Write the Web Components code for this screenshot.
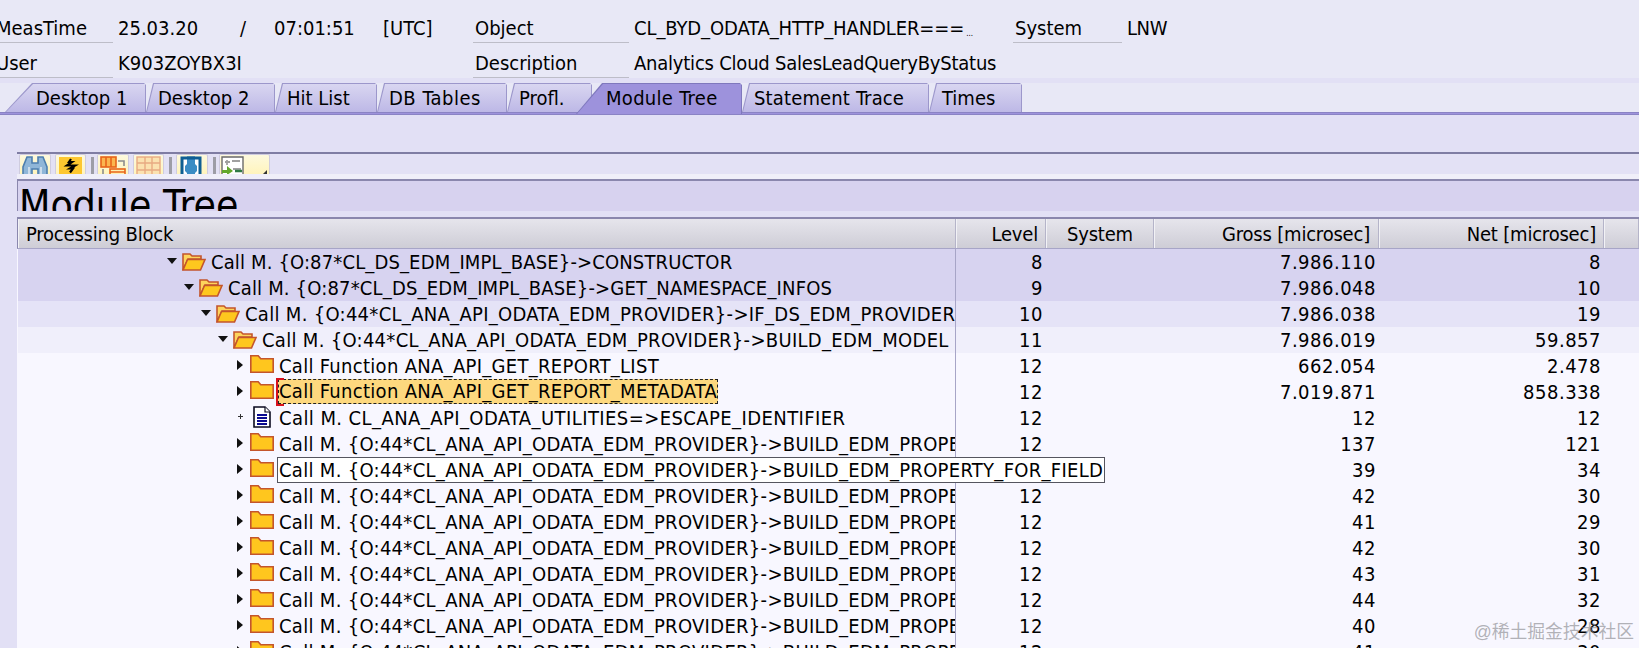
<!DOCTYPE html>
<html lang="en"><head><meta charset="utf-8"><title>Module Tree</title>
<style>
html,body{margin:0;padding:0;height:648px;overflow:hidden;background:#e8e8f6}
body{font-family:"DejaVu Sans",sans-serif;font-stretch:condensed;font-size:17px;color:#000}
</style></head><body>
<sat-app></sat-app>
<script>
const FONT=`font-family:"DejaVu Sans",sans-serif;font-stretch:condensed;`;
const FS='20px';
function el(name,cls){const e=document.createElement(name);if(cls)e.className=cls;return e}

class SatMeta extends HTMLElement{
  constructor(){super();const s=this.attachShadow({mode:'open'});
  s.innerHTML=`<style>
  :host{display:grid;grid-template-columns:118px 122px 34px 109px 90px 161px 379px 114px 1fr;grid-auto-rows:35px;padding-top:8px;height:70px;${FONT}font-size:${FS};background:#e8e8f6}
  .c{display:flex;align-items:center;white-space:nowrap;padding-top:5px;box-sizing:border-box}
  .l{border-bottom:1px solid #bdbdc8}
  .l1{margin-right:5px}
  .l1 span{margin-left:-4px}
  .l2{margin-right:5px;padding-left:2px}
  .wide{grid-column:2 / span 4}
  </style>
  <div class="c l l1"><span>MeasTime</span></div><div class="c">25.03.20</div><div class="c">/</div><div class="c">07:01:51</div><div class="c">[UTC]</div>
  <div class="c l l2">Object</div><div class="c" style="letter-spacing:-.1px">CL_BYD_ODATA_HTTP_HANDLER===<span style="font-size:8px;padding-top:10px;margin-left:2px">...</span></div>
  <div class="c l l2">System</div><div class="c" style="letter-spacing:-.4px">LNW</div>
  <div class="c l l1"><span>User</span></div><div class="c wide">K903ZOYBX3I</div>
  <div class="c l l2">Description</div><div class="c" style="grid-column:span 3;letter-spacing:-.22px">Analytics Cloud SalesLeadQueryByStatus</div>`;}
}
customElements.define('sat-meta',SatMeta);

class SatTab extends HTMLElement{
  constructor(){super();const s=this.attachShadow({mode:'open'});
  s.innerHTML=`<style>
  :host{display:block;box-sizing:border-box;height:29px;padding:1px 1px 0 1px;background:#9c97cb;
    width:var(--w);margin-left:var(--ml,0);letter-spacing:var(--ls,0);
    clip-path:polygon(var(--sl) 0,calc(100% - 2px) 0,100% 2px,100% 100%,0 100%);${FONT}font-size:${FS};}
  .i{height:28px;box-sizing:border-box;padding-left:var(--pl);display:flex;align-items:center;
    background:linear-gradient(#d9d6f1,#bdb8e6);clip-path:polygon(var(--sl) 0,100% 0,100% 100%,0 100%);white-space:nowrap}
  :host([active]){z-index:1;height:31px;margin-bottom:-2px;background:#7f78bd}
  :host([active]) .i{background:#9d92dc;height:30px;padding-bottom:2px}
  </style><div class="i"><slot></slot></div>`;}
}
customElements.define('sat-tab',SatTab);

class SatTabs extends HTMLElement{
  constructor(){super();const s=this.attachShadow({mode:'open'});
  s.innerHTML=`<style>
  :host{display:flex;flex-direction:column;margin-top:5px;background:#e8e8f6}
  .t{display:flex;padding-left:5px;height:29px}
  .b{height:3px;background:#9d92dc;border-top:1px solid #8a83c4;border-bottom:1px solid #8a83c4;box-sizing:border-box}
  ::slotted(sat-tab){position:relative}
  </style><div class="t"><slot></slot></div><div class="b"></div>`;}
}
customElements.define('sat-tabs',SatTabs);

class SatTool extends HTMLElement{
  constructor(){super();const s=this.attachShadow({mode:'open'});
  s.innerHTML=`<style>
  :host{display:block;box-sizing:border-box;height:20px;overflow:hidden;border:1px solid #cfccdf;border-bottom:0;border-radius:2px 2px 0 0;
    background:linear-gradient(#fdf9de,#fff4bc);width:var(--w,32px);margin-left:var(--ml,0)}
  ::slotted(svg){display:block}
  </style><slot></slot>`;}
}
customElements.define('sat-tool',SatTool);

class SatToolSep extends HTMLElement{
  constructor(){super();const s=this.attachShadow({mode:'open'});
  s.innerHTML=`<style>:host{display:block;width:3px;height:17px;background:#9d9da6;margin:3px 3px 0 5px}</style>`;}
}
customElements.define('sat-tool-sep',SatToolSep);

class SatToolbar extends HTMLElement{
  constructor(){super();const s=this.attachShadow({mode:'open'});
  s.innerHTML=`<style>
  :host{display:flex;box-sizing:border-box;height:27px;margin:37px 0 0 17px;border-top:2px solid #7f7da3;padding-left:2px;background:linear-gradient(#e3e1f5 0 20px,#f0eff9 20px 100%)}
  </style><slot></slot>`;}
}
customElements.define('sat-toolbar',SatToolbar);

class SatTitle extends HTMLElement{
  constructor(){super();const s=this.attachShadow({mode:'open'});
  s.innerHTML=`<style>
  :host{display:block;box-sizing:border-box;height:32px;margin-left:17px;border-top:2px solid #8a87ad;border-left:1px solid #8a87ad;background:#d7d2ef;overflow:hidden;${FONT}font-size:40.5px;line-height:48px;padding-left:1px;white-space:nowrap}
  </style><slot></slot>`;}
}
customElements.define('sat-title',SatTitle);

const COLS='938px 90px 108px 225px 225px 1fr';
class SatHead extends HTMLElement{
  constructor(){super();const s=this.attachShadow({mode:'open'});
  s.innerHTML=`<style>
  :host{display:grid;grid-template-columns:${COLS};height:32px;box-sizing:border-box;border-bottom:1px solid #a7a5c7;background:linear-gradient(#e6e5ec,#cecdd6);${FONT}font-size:${FS};letter-spacing:-.2px;border-top:2px solid #8a87ad;border-left:1px solid #8a87ad}
  div{display:flex;align-items:center;box-sizing:border-box;border-right:1px solid #b5b4c9;border-left:1px solid #f2f2f6;white-space:nowrap;padding-top:1px}
  .s{padding-left:7px}.r{justify-content:flex-end;padding-right:7px}.m{padding-left:20px}
  .g{padding-right:8px}
  </style>
  <div class="s">Processing Block</div><div class="r">Level</div><div class="m">System</div><div class="r g">Gross [microsec]</div><div class="r">Net [microsec]</div><div></div>`;}
}
customElements.define('sat-head',SatHead);

const ICONS={
 open:`<svg width="24" height="19" viewBox="0 0 24 19"><path d="M1 18V2h7l2 2h9v3H6L1 18z" fill="#fdd45c" stroke="#c4552c" stroke-width="1.6"/><path d="M1 18L5.5 7.5H23L18.5 18z" fill="#fec71e" stroke="#c4552c" stroke-width="1.6"/></svg>`,
 closed:`<svg width="24" height="18" viewBox="0 0 24 18"><path d="M.8 17.2V.8h7.4l2.6 3h12.4v13.4z" fill="#ffc61e" stroke="#c4552c" stroke-width="1.6"/></svg>`,
 doc:`<svg width="18" height="22" viewBox="0 0 18 22"><path d="M1 1h11l5 5v15H1z" fill="#fff" stroke="#0a0a20" stroke-width="1.6"/><path d="M12 1v5h5" fill="#fff" stroke="#0a0a20" stroke-width="1.2"/><path d="M4 9h10M4 12h10M4 15h10M4 18h10" stroke="#0a0a90" stroke-width="1.8"/></svg>`,
 down:`<svg width="10" height="6" viewBox="0 0 10 6"><path d="M0 0h10L5 6z" fill="#111"/></svg>`,
 right:`<svg width="6" height="10" viewBox="0 0 6 10"><path d="M0 0l6 5-6 5z" fill="#111"/></svg>`,
 leaf:`<svg width="5" height="5" viewBox="0 0 5 5"><path d="M2 0h1v2h2v1H3v2H2V3H0V2h2z" fill="#333"/></svg>`
};

class SatRow extends HTMLElement{
  constructor(){super();this.attachShadow({mode:'open'})}
  connectedCallback(){
    const d=this.data;
    const kind=d.kind||'closed';
    const tw=kind==='open'?ICONS.down:kind==='doc'?ICONS.leaf:ICONS.right;
    this.shadowRoot.innerHTML=`<style>
    :host{display:grid;grid-template-columns:${COLS};height:26px;${FONT}font-size:${FS};background:${d.bg};margin-left:1px}
    .t{display:flex;align-items:center;overflow:${d.tip||d.sel?'visible':'hidden'};border-right:1px solid #a7a5c7;box-sizing:border-box;white-space:nowrap;padding-left:${147+d.ind}px;width:938px}
    .tw{width:17px;flex:none;display:flex;justify-content:${kind==='open'?'flex-start':'center'};padding:${kind==='open'?'0 0 0 2px':'0 3px 0 0'};box-sizing:border-box;align-items:center;margin-top:-3px}
    .ic{flex:none;width:24px;display:flex;justify-content:center;margin-top:${kind==='closed'?'-4px':kind==='open'?'-1px':'-2px'}}
    svg{display:block}
    .x{margin-left:5px;display:block;letter-spacing:${d.ls||'.3px'}}
    .x.sel{margin-left:4px;padding:0 1px;height:25px;line-height:24px;background:#fdd87e;outline:1px dashed #222;outline-offset:-1px;position:relative;box-sizing:border-box;margin-top:-1px}
    .x.sel::before{content:"";position:absolute;left:-2px;top:-1px;bottom:-2px;width:8px;border:solid #d8121c;border-width:2px 0 2px 2px;box-sizing:border-box}
    .x.tip{margin-left:3px;padding:0 1px;height:26px;line-height:24px;background:#fff;border:1px solid #55555f;box-sizing:border-box;position:relative;z-index:2;flex:none}
    .n{display:flex;align-items:center;justify-content:flex-end;padding-right:3px;box-sizing:border-box;letter-spacing:.5px}
    </style>
    <div class="t"><span class="tw">${tw}</span><span class="ic">${ICONS[kind]}</span><span class="x ${d.sel?'sel':''} ${d.tip?'tip':''}">${d.text}</span></div>
    <div class="n">${d.level}</div><div class="n"></div><div class="n">${d.gross}</div><div class="n">${d.net}</div><div></div>`;
  }
}
customElements.define('sat-row',SatRow);

const P='Call M. {O:44*CL_ANA_API_ODATA_EDM_PROVIDER}-&gt;';
const PROP=P+'BUILD_EDM_PROPERTY_FOR_FIELD';
const ROWS=[
 {ind:0,ls:'.14px',kind:'open',bg:'#d7d3f0',text:'Call M. {O:87*CL_DS_EDM_IMPL_BASE}-&gt;CONSTRUCTOR',level:8,gross:'7.986.110',net:'8'},
 {ind:17,ls:'.17px',kind:'open',bg:'#d7d3f0',text:'Call M. {O:87*CL_DS_EDM_IMPL_BASE}-&gt;GET_NAMESPACE_INFOS',level:9,gross:'7.986.048',net:'10'},
 {ind:34,kind:'open',bg:'#e5e3f7',text:P+'IF_DS_EDM_PROVIDER~GET_NAMESPACE_INFOS',level:10,gross:'7.986.038',net:'19'},
 {ind:51,kind:'open',bg:'#f0effb',text:P+'BUILD_EDM_MODEL',level:11,gross:'7.986.019',net:'59.857'},
 {ind:68,text:'Call Function ANA_API_GET_REPORT_LIST',level:12,gross:'662.054',net:'2.478'},
 {ind:68,sel:1,text:'Call Function ANA_API_GET_REPORT_METADATA',level:12,gross:'7.019.871',net:'858.338'},
 {ind:68,ls:'.42px',kind:'doc',text:'Call M. CL_ANA_API_ODATA_UTILITIES=&gt;ESCAPE_IDENTIFIER',level:12,gross:'12',net:'12'},
 {ind:68,text:PROP,level:12,gross:'137',net:'121'},
 {ind:68,tip:1,text:PROP,level:12,gross:'39',net:'34'},
 {ind:68,text:PROP,level:12,gross:'42',net:'30'},
 {ind:68,text:PROP,level:12,gross:'41',net:'29'},
 {ind:68,text:PROP,level:12,gross:'42',net:'30'},
 {ind:68,text:PROP,level:12,gross:'43',net:'31'},
 {ind:68,text:PROP,level:12,gross:'44',net:'32'},
 {ind:68,text:PROP,level:12,gross:'40',net:'28'},
 {ind:68,text:PROP,level:12,gross:'41',net:'30'}
];
class SatTable extends HTMLElement{
  constructor(){super();const s=this.attachShadow({mode:'open'});
  s.innerHTML=`<style>:host{display:block;margin:6px 0 0 17px;background:#f8f7ff;height:431px;overflow:hidden}
  </style><sat-head></sat-head>`;
  ROWS.forEach(r=>{const e=el('sat-row');e.data=Object.assign({bg:'#f8f7ff'},r);s.appendChild(e)});}
}
customElements.define('sat-table',SatTable);

class SatApp extends HTMLElement{
  constructor(){super();const s=this.attachShadow({mode:'open'});
  s.innerHTML=`<style>
  :host{display:block;position:relative;height:648px;width:1639px;overflow:hidden;background:#e2e0f5;color:#000}
  .wm{position:absolute;right:5px;top:617px;font-family:"Liberation Sans","Noto Sans CJK SC",sans-serif;font-size:17.8px;color:rgba(130,130,135,.6);white-space:nowrap}
  svg{display:block}
  </style>
  <sat-meta></sat-meta>
  <sat-tabs>
    <sat-tab style="--w:141px;--sl:27px;--pl:30px">Desktop 1</sat-tab>
    <sat-tab style="--w:129px;--sl:7px;--pl:11px">Desktop 2</sat-tab>
    <sat-tab style="--w:102px;--sl:7px;--pl:11px">Hit List</sat-tab>
    <sat-tab style="--w:130px;--sl:7px;--pl:11px;--ls:.5px">DB Tables</sat-tab>
    <sat-tab style="--w:85px;--sl:7px;--pl:11px">Profl.</sat-tab>
    <sat-tab active style="--w:166px;--sl:26px;--pl:29px;--ml:-16px;--ls:.3px">Module Tree</sat-tab>
    <sat-tab style="--w:187px;--sl:7px;--pl:11px;--ls:.15px">Statement Trace</sat-tab>
    <sat-tab style="--w:93px;--sl:7px;--pl:12px">Times</sat-tab>
  </sat-tabs>
  <sat-toolbar>
    <sat-tool style="--w:32px"><svg width="30" height="20" viewBox="0 0 30 20"><path d="M7 2h5v6h6V2h5l4 10v8h-9v-6h-6v6H3v-8z" fill="#8fb6d8" stroke="#4d7fb0" stroke-width="1.6"/><path d="M9 12v8M21 12v8" stroke="#dbe7f2" stroke-width="1.6"/></svg></sat-tool>
    <sat-tool style="--w:31px;--ml:4px"><svg width="29" height="20" viewBox="0 0 29 20"><rect x="3" y="2" width="23" height="18" fill="#fdc730"/><path d="M15 4l-2 3h3l-5 3.500h8l-5 3h3l-3 4" fill="none" stroke="#000" stroke-width="2.200"/></svg></sat-tool>
    <sat-tool-sep></sat-tool-sep>
    <sat-tool style="--w:32px"><svg width="30" height="20" viewBox="0 0 30 20"><rect x="3" y="2" width="15" height="10" fill="#fbb64f" stroke="#e8641a" stroke-width="1.6"/><path d="M8 2v10M13 2v10" stroke="#e8641a" stroke-width="1.6"/><path d="M20 6h6v5" fill="none" stroke="#8c8c8c" stroke-width="1.6"/><path d="M5 14v6" stroke="#8c8c8c" stroke-width="1.6"/><rect x="12" y="14" width="15" height="8" fill="#fff0b0" stroke="#e8641a" stroke-width="1.6"/><path d="M12 17h15" stroke="#e8641a" stroke-width="1.4"/></svg></sat-tool>
    <sat-tool style="--w:31px;--ml:4px"><svg width="29" height="20" viewBox="0 0 29 20"><rect x="3" y="2" width="23" height="20" fill="#fbe2b0" stroke="#e8ab82" stroke-width="1.4"/><path d="M3 8h23M3 15h23M11 2v20M18 2v20" stroke="#e8ab82" stroke-width="1.4"/></svg></sat-tool>
    <sat-tool-sep></sat-tool-sep>
    <sat-tool style="--w:32px;--ml:1px"><svg width="30" height="20" viewBox="0 0 30 20"><path d="M5 20V3h18v17" fill="#fff" stroke="#0f5f93" stroke-width="3"/><path d="M10 3h8v6l2 2v5l-2 2v2h-8v-2l-2-2v-5l2-2z" fill="#3a8cc4"/><path d="M10 3h8" stroke="#0f5f93" stroke-width="3"/></svg></sat-tool>
    <sat-tool-sep></sat-tool-sep>
    <sat-tool style="--w:51px"><svg width="49" height="20" viewBox="0 0 49 20"><path d="M2 20V2h21v18" fill="#fff" stroke="#6a6a6a" stroke-width="1.4"/><path d="M7 5v5M5 7h5M12 6h8M13 14h8" stroke="#a0a0a0" stroke-width="1.8"/><path d="M2 15h5v-4l6 5-6 4v-2H2z" fill="#63a82c"/><path d="M15 16h7" stroke="#2f7a45" stroke-width="2.4"/><path d="M47 15v5h-5z" fill="#333"/></svg></sat-tool>
  </sat-toolbar>
  <sat-title>Module Tree</sat-title>
  <sat-table></sat-table>
  <div class="wm">@稀土掘金技术社区</div>`;}
}
customElements.define('sat-app',SatApp);
</script>
</body></html>
